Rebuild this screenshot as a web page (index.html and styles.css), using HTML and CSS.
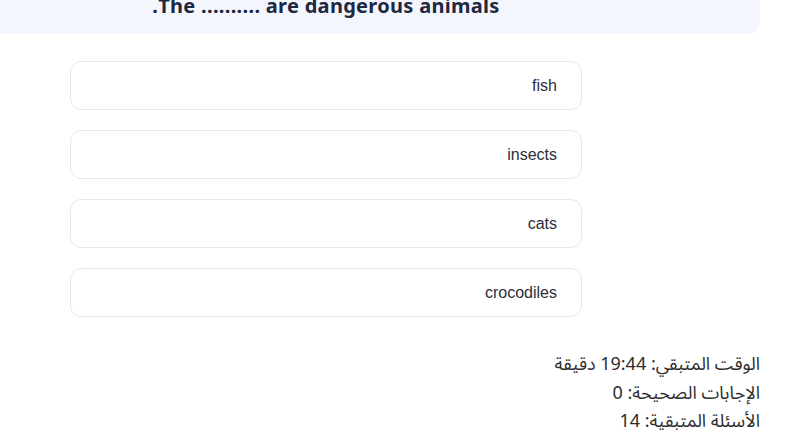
FILE: index.html
```html
<!DOCTYPE html>
<html lang="ar" dir="rtl">

<head>
    <meta charset="UTF-8" />
    <title>اختبار</title>
    <link rel="stylesheet" href="styles.css">
</head>

<body>

    <div class="quiz">
        <div class="question-card">
            <h3 class="question-text">The .......... are dangerous animals.</h3>
        </div>

        <div class="answers">
            <button class="answer">fish</button>
            <button class="answer">insects</button>
            <button class="answer">cats</button>
            <button class="answer">crocodiles</button>
        </div>

        <div class="stats">
            <p>الوقت المتبقي: 19:44 دقيقة</p>
            <p>الإجابات الصحيحة: 0</p>
            <p>الأسئلة المتبقية: 14</p>
        </div>
    </div>

</body>

</html>
```

FILE: styles.css
```css
body {
    margin: 0;
    background: #fff;
    font-family: "Noto Sans", "Noto Sans Arabic", "DejaVu Sans", sans-serif;
    overflow: hidden;
}

.quiz {
    width: 868px;
    margin-right: 40px;
    margin-top: -31px;
}

.question-card {
    background: #f3f6fd;
    border-radius: 12px;
    padding: 24px 20px 16px;
    text-align: center;
}

.question-text {
    margin: 0;
    font-size: 20px;
    line-height: 25px;
    font-weight: 700;
    letter-spacing: 0.3px;
    color: #1e2840;
}

.answers {
    width: 512px;
    margin: 27px auto 0;
    display: flex;
    flex-direction: column;
    gap: 20px;
}

.answer {
    height: 49px;
    padding: 0 24px;
    background: #fff;
    border: 1.5px solid #e6e8ec;
    border-radius: 11px;
    font-family: "Liberation Sans", Arial, sans-serif;
    font-size: 16px;
    color: #2b2f38;
    text-align: right;
    cursor: pointer;
}

.stats {
    margin-top: 32px;
    text-align: right;
}

.stats p {
    margin: 0;
    font-size: 18px;
    line-height: 28.5px;
    color: #2e2e2e;
}
```
